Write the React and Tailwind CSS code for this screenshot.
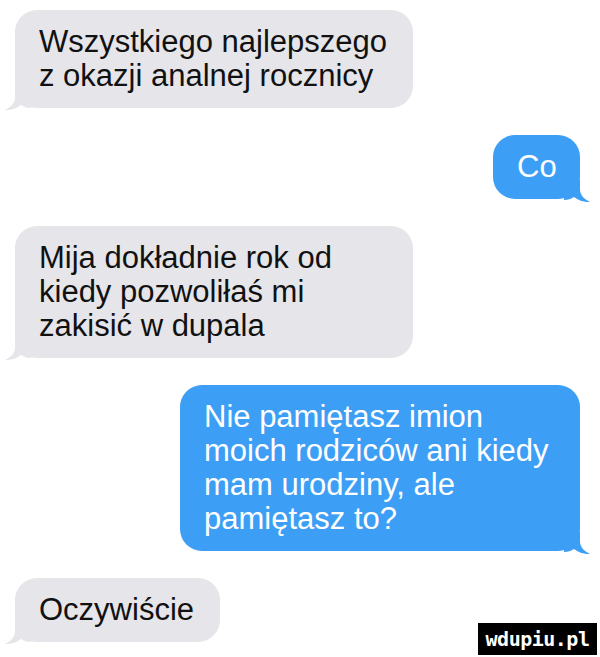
import React from "react";

const GRAY = "#e5e5ea";
const BLUE = "#3d9ef5";

function LeftTail() {
  return (
    <svg
      className="absolute left-[-10px] bottom-[-2px]"
      width="26"
      height="22"
      viewBox="0 0 26 22"
    >
      <path
        d="M10 0 L10 9 C10 15 6 19 0 22 C7 22 12 20 16 17 C19 19 22 20 26 20 L26 0 Z"
        fill={GRAY}
      />
    </svg>
  );
}

function RightTail() {
  return (
    <svg
      className="absolute right-[-10px] bottom-[-3px]"
      width="26"
      height="22"
      viewBox="0 0 26 22"
    >
      <path
        d="M16 0 L16 9 C16 15 20 19 26 22 C19 22 14 20 10 17 C7 19 4 20 0 20 L0 0 Z"
        fill={BLUE}
      />
    </svg>
  );
}

function Gray({ w, children }) {
  return (
    <div
      className={`relative self-start ml-[15px] rounded-[22px] bg-[#e5e5ea] pl-[24px] pr-[10px] py-[15px] text-[#111111] ${w}`}
    >
      <LeftTail />
      <div className="relative whitespace-nowrap">{children}</div>
    </div>
  );
}

function Blue({ w, children }) {
  return (
    <div
      className={`relative self-end mr-[20px] rounded-[22px] bg-[#3d9ef5] pl-[24px] pr-[10px] py-[15px] text-white ${w}`}
    >
      <RightTail />
      <div className="relative whitespace-nowrap">{children}</div>
    </div>
  );
}

export default function App() {
  return (
    <div
      className="relative w-[600px] h-[657px] overflow-hidden bg-white flex flex-col gap-[27px] pt-[10px] text-[31px] leading-[34px]"
      style={{ fontFamily: '"Liberation Sans", Arial, sans-serif' }}
    >
      <Gray w="w-[398px]">
        Wszystkiego najlepszego
        <br />z okazji analnej rocznicy
      </Gray>
      <Blue w="w-[87px]">Co</Blue>
      <Gray w="w-[398px]">
        Mija dokładnie rok od
        <br />
        kiedy pozwoliłaś mi
        <br />
        zakisić w dupala
      </Gray>
      <Blue w="w-[400px]">
        Nie pamiętasz imion
        <br />
        moich rodziców ani kiedy
        <br />
        mam urodziny, ale
        <br />
        pamiętasz to?
      </Blue>
      <Gray w="w-[205px]">Oczywiście</Gray>

      <div className="absolute right-[3px] bottom-[2px] w-[119px] h-[32px] bg-black flex items-center justify-center">
        <span
          className="text-white text-[20px] leading-none font-bold tracking-[-0.5px]"
          style={{ fontFamily: '"DejaVu Sans Mono", monospace' }}
        >
          wdupiu.pl
        </span>
      </div>
    </div>
  );
}
